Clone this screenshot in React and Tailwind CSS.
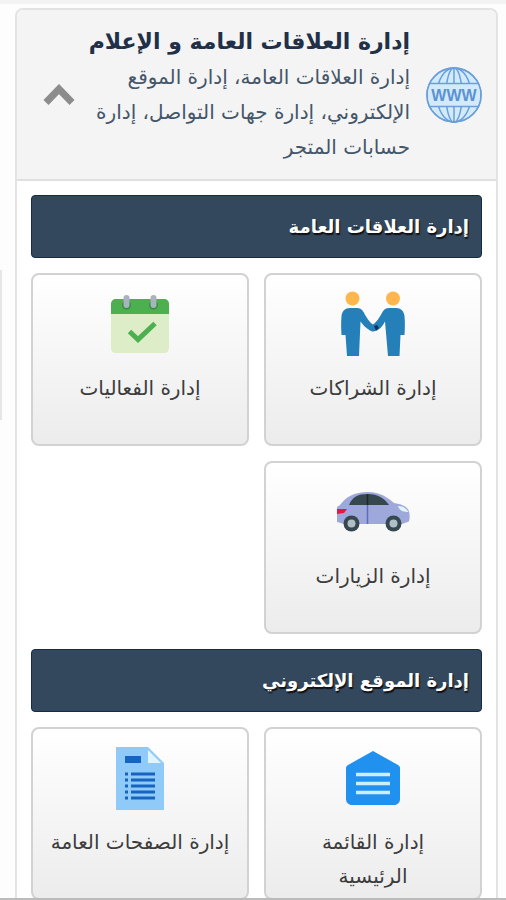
import { useState } from "react";

const GlobeIcon = () => (
    <svg viewBox="0 0 56 56" className="w-14 h-14 shrink-0" fill="none" stroke="#6a9fd8" strokeWidth="1.5" aria-hidden="true">
        <circle cx="28" cy="28" r="27" fill="#d3eafc" />
        <ellipse cx="28" cy="28" rx="17" ry="27" />
        <ellipse cx="28" cy="28" rx="8" ry="27" />
        <path d="M28 1v54" />
        <path d="M4.500 16.500h47L54 22v12l-2.500 5.500h-47L2 34V22z" fill="#d3eafc" stroke="none" />
        <path d="M4 16.500h48M4 39.500h48" />
        <circle cx="28" cy="28" r="27" />
        <text
            x="28"
            y="34"
            textAnchor="middle"
            fill="#5b93d1"
            stroke="none"
            className="font-['Liberation_Sans',sans-serif] font-bold text-[16px]"
        >
            WWW
        </text>
    </svg>
);

const PartnersIcon = () => (
    <svg viewBox="0 0 64 66" className="w-16 h-[66px]" aria-hidden="true">
        <circle cx="11.500" cy="7.500" r="7" fill="#ffb74d" />
        <circle cx="52" cy="7.500" r="7" fill="#ffb74d" />
        <path
            d="M9 17h7c3 0 5 1.500 6.500 4 3 5.500 5.500 10 10.500 13.500l2 4.500c-2 2-4 1.500-6 .5-4-2.500-7-5.500-9.500-9L18 65H6L4.500 44H.5C0 37 0 31 .5 25c.6-5 3.500-8 8.500-8z"
            fill="#2580b9"
        />
        <path
            d="M55 17h-7c-3 0-5 1.500-6.500 4-3 5.500-6 10.500-11 13.500L31 40c3 .5 4.500 0 6.500-1.500 3-2 4.500-4.500 6.500-8L47 65h11.500L59.500 44h4c.5-7 .5-13 0-19-.6-5-3.500-8-8.500-8z"
            fill="#2580b9"
        />
        <path d="M33 35l3-1 2 3-3 2.500z" fill="#12344d" />
    </svg>
);

const EventsIcon = () => (
    <svg viewBox="0 0 58 58" className="w-[58px] h-[58px]" aria-hidden="true">
        <path d="M0 18h58v35c0 3-2 5-5 5H5c-3 0-5-2-5-5z" fill="#dcedc8" />
        <path d="M5 4h48c3 0 5 2 5 5v10H0V9c0-3 2-5 5-5z" fill="#4caf50" />
        <circle cx="15.500" cy="10" r="4.500" fill="#388e3c" />
        <circle cx="42.500" cy="10" r="4.500" fill="#388e3c" />
        <rect x="12.500" y="0" width="6" height="13" rx="3" fill="#a4b5be" />
        <rect x="39.500" y="0" width="6" height="13" rx="3" fill="#a4b5be" />
        <path d="M18.500 36.500l8.500 8 17-16" fill="none" stroke="#4caf50" strokeWidth="5" />
    </svg>
);

const CarIcon = () => (
    <svg viewBox="0 0 74 40" className="w-[74px] h-10" aria-hidden="true">
        <path
            d="M1 15l3-2C10 5 18 0 32 0c12 0 19 5 26 11 7 1 12 3 14.500 7 1.500 4 1.500 8 .5 11.500l-7 2.500H8L1 30z"
            fill="#9fa8da"
        />
        <path d="M13 13C16 5 22 2 32 2c10 0 16 4 21 11z" fill="#37474f" />
        <path d="M31.500 13v19" stroke="#5c6bc0" strokeWidth="1.500" />
        <path d="M31.500 2v11" stroke="#1c262b" strokeWidth="1.500" />
        <path d="M1 17h10l-3 4-7 1z" fill="#e8173f" />
        <path d="M62 14c5 0 8 2 10.500 6-5 0-9-1-10.500-6z" fill="#e1f5fe" />
        <circle cx="15.500" cy="31.500" r="8" fill="#37474f" />
        <circle cx="15.500" cy="31.500" r="4" fill="#b0bec5" />
        <circle cx="57.500" cy="31.500" r="8" fill="#37474f" />
        <circle cx="57.500" cy="31.500" r="4" fill="#b0bec5" />
    </svg>
);

const MenuIcon = () => (
    <svg viewBox="0 0 54 54" className="w-[54px] h-[54px]" aria-hidden="true">
        <path d="M27 0l25 14c1.500 1 2 2 2 3v31c0 3.500-2.500 6-6 6H6c-3.500 0-6-2.500-6-6V17c0-1 .5-2 2-3z" fill="#2191f0" />
        <path d="M10 23.500h34M10 32.500h34M10 41.500h34" stroke="#cdeefd" strokeWidth="3.500" />
    </svg>
);

const PagesIcon = () => (
    <svg viewBox="0 0 48 63" className="w-12 h-[63px]" aria-hidden="true">
        <path d="M0 0h32l16 16v47H0z" fill="#90caf9" />
        <path d="M32 3v13h13z" fill="#e1f5fe" />
        <path d="M9 9h16v7H9z" fill="#1565c0" />
        <path d="M15 27h24M15 33h24M15 39h24M15 45h24M15 51h24M9 27h3M9 33h3M9 39h3M9 45h3M9 51h3" stroke="#1565c0" strokeWidth="3" />
    </svg>
);

const sections = [
    {
        title: "إدارة العلاقات العامة",
        items: [
            { label: "إدارة الشراكات", Icon: PartnersIcon },
            { label: "إدارة الفعاليات", Icon: EventsIcon },
            { label: "إدارة الزيارات", Icon: CarIcon },
        ],
    },
    {
        title: "إدارة الموقع الإلكتروني",
        items: [
            { label: "إدارة القائمة\nالرئيسية", Icon: MenuIcon },
            { label: "إدارة الصفحات العامة", Icon: PagesIcon },
        ],
    },
];

const Tile = ({ label, Icon }) => (
    <a
        href="#"
        className="flex flex-col items-center min-h-[173px] px-2 pt-[14px] text-center border-2 border-[#d2d2d2] rounded-lg bg-gradient-to-b from-white to-[#ececec]"
    >
        <span className="flex items-center justify-center h-[70px] shrink-0">
            <Icon />
        </span>
        <span className="mt-3 text-xl leading-[34px] text-[#3c3c3c] whitespace-pre-line">{label}</span>
    </a>
);

const App = () => {
    const [open, setOpen] = useState(true);

    return (
        <div
            dir="rtl"
            className="relative min-h-screen pt-1 pl-[15px] pr-2 bg-[#fdfdfd] border-t-4 border-t-[#f3f3f3] font-['DejaVu_Sans',sans-serif]"
        >
            <main className="bg-white border-2 border-b-0 border-[#e3e3e3] rounded-t-lg">
                <button
                    type="button"
                    aria-expanded={open}
                    onClick={() => setOpen(!open)}
                    className="flex items-center w-full px-[14px] py-[14px] text-right bg-[#f4f4f4] border-b-2 border-[#e0e0e0] rounded-t-md cursor-pointer"
                >
                    <GlobeIcon />
                    <span className="flex-1 mr-4 ml-2 text-[#1f3048]">
                        <span className="block text-[22px] font-bold leading-9">إدارة العلاقات العامة و الإعلام</span>
                        <span className="block text-xl leading-[35px] text-[#44566a]">
                            إدارة العلاقات العامة، إدارة الموقع الإلكتروني، إدارة جهات التواصل، إدارة حسابات المتجر
                        </span>
                    </span>
                    <svg viewBox="0 0 32 22" className="w-8 ml-3 h-[22px] shrink-0" aria-hidden="true">
                        <path d="M3 18.500L16 5l13 13.500" fill="none" stroke="#8c8c8c" strokeWidth="7" />
                    </svg>
                </button>

                {open && (
                    <div className="flex flex-col gap-[15px] px-[14px] pt-[14px]">
                        {sections.map((section) => (
                            <section key={section.title} className="flex flex-col gap-[15px]">
                                <h2 className="px-3 py-3 text-lg font-bold leading-[37px] text-white bg-[#33475d] border border-[#142c4c] rounded [text-shadow:1px_2px_1px_#111]">
                                    {section.title}
                                </h2>
                                <div className="grid grid-cols-2 gap-[15px]">
                                    {section.items.map((item) => (
                                        <Tile key={item.label} {...item} />
                                    ))}
                                </div>
                            </section>
                        ))}
                    </div>
                )}
            </main>
            <div className="absolute left-0 w-0.5 bg-[#e6e6e6] top-[266px] h-[150px]" />
            <div className="fixed inset-x-0 bottom-0 h-0.5 bg-[#b9bcbf]" />
        </div>
    );
};

export default App;
